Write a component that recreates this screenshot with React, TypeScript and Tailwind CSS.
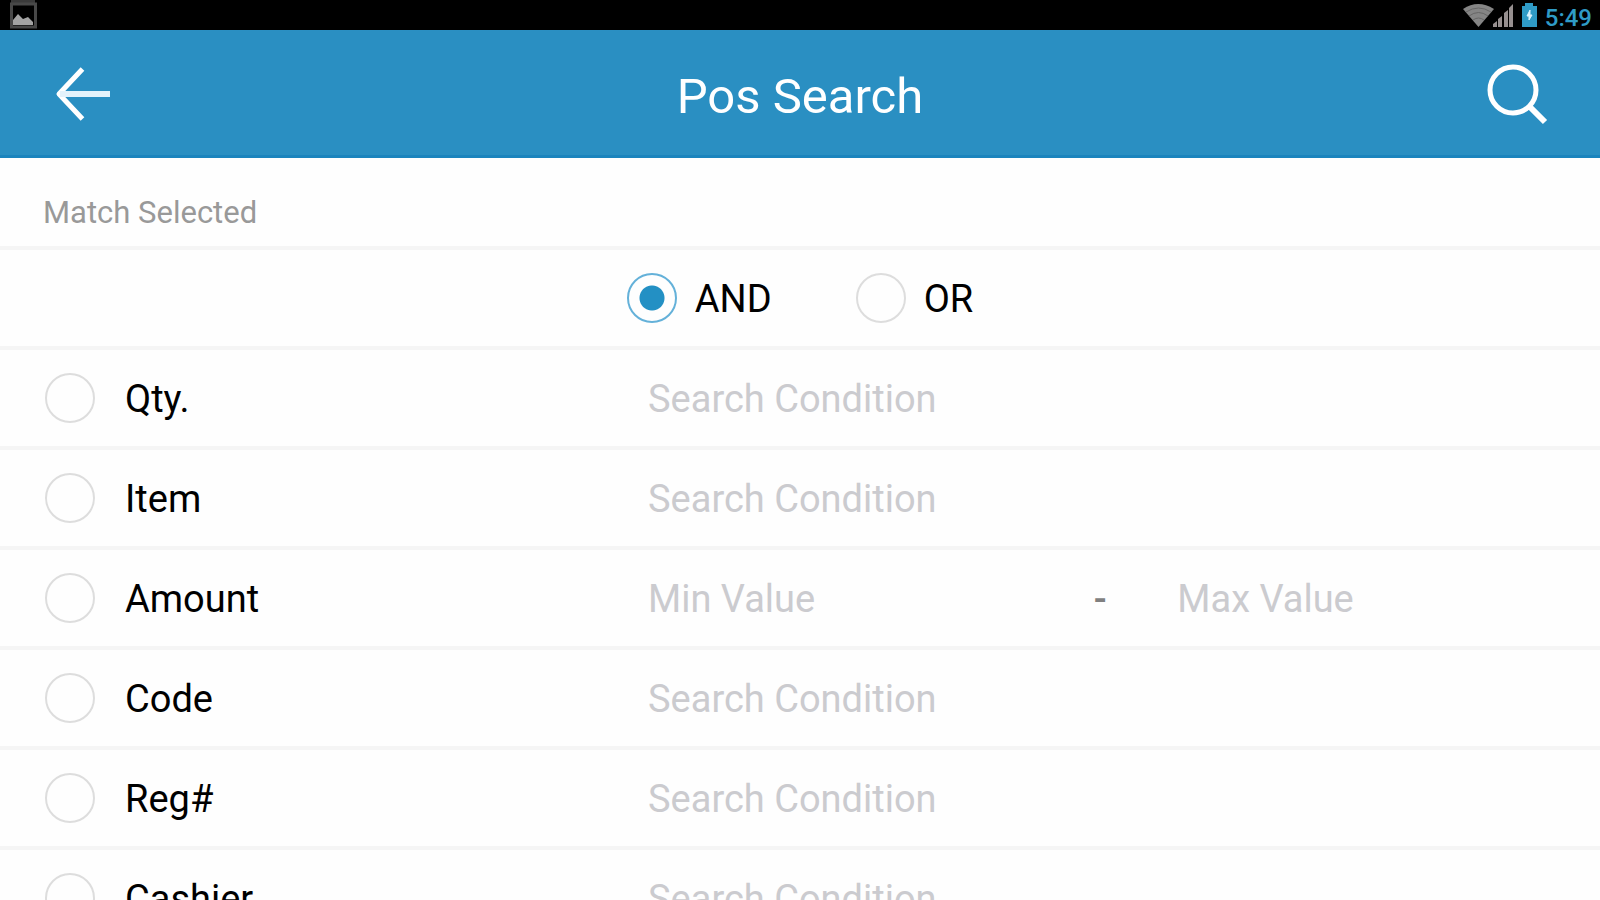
import React, { useState } from 'react';

type MatchMode = 'AND' | 'OR';

interface SearchField {
  id: string;
  label: string;
  range?: boolean;
}

const fields: SearchField[] = [
  { id: 'qty', label: 'Qty.' },
  { id: 'item', label: 'Item' },
  { id: 'amount', label: 'Amount', range: true },
  { id: 'code', label: 'Code' },
  { id: 'reg', label: 'Reg#' },
  { id: 'cashier', label: 'Cashier' },
];

const inputClass =
  'min-w-0 w-full bg-transparent pt-[2px] text-[38px] leading-[48px] text-black placeholder:text-[#cbcbcf] outline-none';

const circleClass =
  'appearance-none w-[50px] h-[50px] rounded-full border-2 border-[#dddddd] checked:border-[#64b1d9] checked:bg-[radial-gradient(circle,#2390c4_12px,transparent_13px)]';

const StatusBar: React.FC = () => (
  <div className="h-[30px] shrink-0 bg-black flex items-start justify-between pl-[10px] pr-2">
    {/* Screenshot notification */}
    <svg width="28" height="29" viewBox="0 0 28 29">
      <rect x="1" y="0" width="24" height="3" fill="#3a3a3a" />
      <rect x="1.5" y="4" width="24" height="23" fill="none" stroke="#484848" strokeWidth="3" />
      <path d="M3 25V20L8 14L13 19L18 17L23 22V25Z" fill="#a3a3a3" />
    </svg>

    <div className="flex items-start">
      <svg width="76" height="30" viewBox="0 0 76 30">
        {/* Wifi */}
        <path d="M0 9Q15 -1 31 9L15.500 27Z" fill="#858585" />
        <path d="M3 12Q15.500 4 28 12M6 16Q15.500 9 25 16M10 20Q15.500 16 21 20" fill="none" stroke="#666" strokeWidth="1" />
        {/* Signal */}
        <path d="M30 27V24L34 21V27ZM35 27V19L39 16V27ZM41 27V13L45 10V27ZM46 27V8L50 4V27Z" fill="#979090" />
        {/* Battery */}
        <path d="M62 3H70V6H74V27H59V6H62Z" fill="#2f9bc6" />
        <path d="M67 10L64 16H66V20L69 15H67Z" fill="#d8f3ff" stroke="#d8f3ff" />
      </svg>
      <span className="ml-1.5 pt-[2px] text-[24px] leading-[32px] font-medium text-[#2f9bc6]">5:49</span>
    </div>
  </div>
);

const App: React.FC = () => {
  const [mode, setMode] = useState<MatchMode>('AND');
  const [selected, setSelected] = useState<string[]>([]);

  const toggle = (id: string) => {
    setSelected((prev) => (prev.includes(id) ? prev.filter((s) => s !== id) : [...prev, id]));
  };

  return (
    <div className="h-screen flex flex-col overflow-hidden bg-[#fefefe] font-[Roboto,sans-serif] text-black">
      <StatusBar />

      {/* Title bar */}
      <header className="h-32 shrink-0 flex items-center justify-between bg-[#2a8fc2] border-b-3 border-[#1b84bd] px-[52px] pt-[2px] text-white">
        <button aria-label="Back" className="w-[62px] h-[62px]">
          <svg width="62" height="62" viewBox="0 0 62 62" fill="none" stroke="currentColor" strokeWidth="5">
            <path d="M30.500 6L7 31L30.500 56" strokeLinejoin="round" />
            <path d="M8 31H58" stroke="#e3f2fb" strokeWidth="6" />
          </svg>
        </button>
        <h1 className="pt-1.5 text-[49px] leading-[56px]">Pos Search</h1>
        <button aria-label="Search" className="w-[62px] h-[62px]">
          <svg width="62" height="62" viewBox="0 0 62 62" fill="none" stroke="currentColor" strokeWidth="5">
            <circle cx="27" cy="27" r="23" />
            <path d="M43 43L59 59" strokeWidth="6" />
          </svg>
        </button>
      </header>

      <main className="flex-1 overflow-y-auto [scrollbar-width:none]">
        <h2 className="h-[92px] border-b-4 border-[#f5f5f5] px-[43px] pt-[35px] text-[31px] leading-[40px] text-[#999999]">
          Match Selected
        </h2>

        <div className="h-[100px] border-b-4 border-[#f5f5f5] flex items-center justify-center gap-[84px]">
          {(['AND', 'OR'] as MatchMode[]).map((m) => (
            <label key={m} className="flex items-center gap-[18px] text-[38px] leading-[48px]">
              <input
                type="radio"
                name="match"
                checked={mode === m}
                onChange={() => setMode(m)}
                className={circleClass}
              />
              <span className="pt-[2px]">{m}</span>
            </label>
          ))}
        </div>

        {fields.map((field) => (
          <div key={field.id} className="h-[100px] border-b-4 border-[#f5f5f5] flex items-center">
            <label className="w-[40.5%] shrink-0 pl-[45px] flex items-center gap-[30px] text-[38px] leading-[48px]">
              <input
                type="checkbox"
                checked={selected.includes(field.id)}
                onChange={() => toggle(field.id)}
                className={circleClass}
              />
              <span className="pt-[2px]">{field.label}</span>
            </label>
            {field.range ? (
              <div className="flex-1 grid grid-cols-[394fr_162fr_444fr] items-center">
                <input type="text" aria-label="Amount from" placeholder="Min Value" className={inputClass} />
                <span className="pt-[2px] text-center text-[38px] leading-[48px] font-medium text-[#808080]">-</span>
                <input type="text" aria-label="Amount to" placeholder="Max Value" className={inputClass} />
              </div>
            ) : (
              <input type="text" aria-label={field.label} placeholder="Search Condition" className={inputClass} />
            )}
          </div>
        ))}
      </main>
    </div>
  );
};

export default App;
